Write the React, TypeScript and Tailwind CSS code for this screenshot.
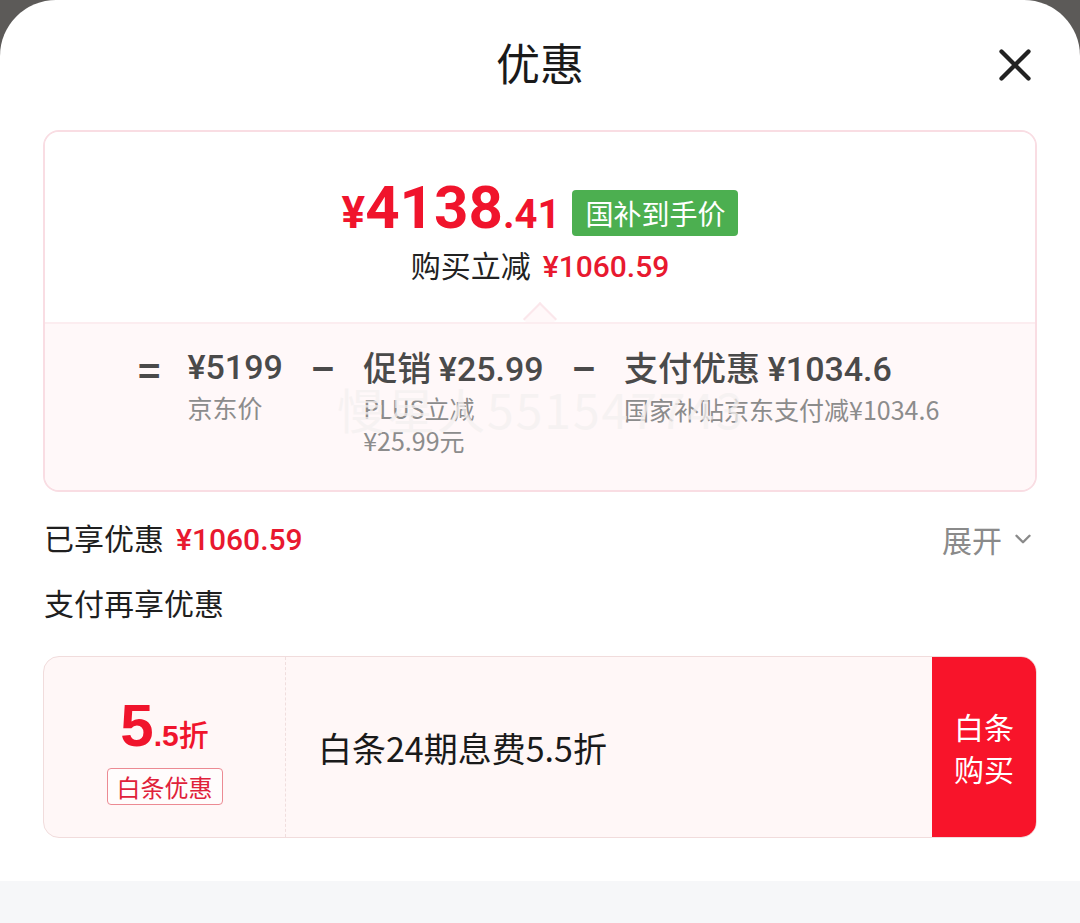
import { X, ChevronDown } from "lucide-react";

const cjk = { fontFamily: '"Noto Sans CJK SC", "Noto Sans", sans-serif' };
const num = { fontFamily: 'Roboto, "Noto Sans CJK SC", sans-serif' };
const arial = { fontFamily: '"Liberation Sans", Arial, sans-serif' };

export default function App() {
  return (
    <div className="h-[923px] w-[1080px] overflow-hidden bg-[#5c5a58]" style={cjk}>
      <div className="flex h-full flex-col rounded-t-[56px] bg-white">
        {/* Header */}
        <div className="relative flex h-[130px] items-start justify-center pt-[32px]">
          <h1 className="text-[44px] leading-[60px] text-[#1a1a1a]">优惠</h1>
          <button className="absolute top-[38px] right-[38px] text-[#222]">
            <X size={54} strokeWidth={1.9} />
          </button>
        </div>

        {/* Price card */}
        <div className="relative mx-[43px] overflow-hidden rounded-[16px] border-2 border-[#f9dde3]">
          <div className="flex h-[190px] flex-col items-center bg-white pt-[46px]">
            <div className="flex items-end gap-[12px]">
              <div className="flex items-baseline font-bold text-[#f0142c]" style={num}>
                <span className="text-[44px] leading-none">¥</span>
                <span className="text-[60px] leading-none">4138</span>
                <span className="text-[40px] leading-none">.41</span>
              </div>
              <span className="mb-[2px] rounded-[4px] bg-[#4caf50] px-[13px] py-[3px] text-[28px] leading-[40px] text-white">
                国补到手价
              </span>
            </div>
            <div className="mt-[6px] flex items-baseline gap-[12px] text-[30px] leading-[40px]">
              <span className="text-[#222]">购买立减</span>
              <span className="font-medium text-[#e8192f]" style={num}>¥1060.59</span>
            </div>
          </div>
          {/* pointer */}
          <div className="absolute top-[175px] left-1/2 h-[24px] w-[24px] -translate-x-1/2 rotate-45 border-t-2 border-l-2 border-[#fbe7eb] bg-[#fff8f9]" />
          <div className="relative h-[168px] border-t-2 border-[#fcedf0] bg-[#fff8f9] pt-[20px] pl-[93px]">
            <div className="flex items-start text-[#4a4a4a]">
              <span className="mt-[2px] mr-[27px] text-[38px] leading-[46px] font-bold">=</span>
              <div className="flex flex-col">
                <span className="text-[34px] leading-[46px] font-medium" style={num}>¥5199</span>
                <span className="text-[25px] leading-[34px] text-[#8c8c8c]">京东价</span>
              </div>
              <span className="mx-[29px] text-[38px] leading-[46px] font-bold">−</span>
              <div className="flex flex-col">
                <span className="text-[34px] leading-[46px] font-medium">
                  促销 <span style={num}>¥25.99</span>
                </span>
                <span className="text-[25px] leading-[32px] text-[#8c8c8c]">PLUS立减</span>
                <span className="text-[25px] leading-[32px] text-[#8c8c8c]">¥25.99元</span>
              </div>
              <span className="mx-[29px] text-[38px] leading-[46px] font-bold">−</span>
              <div className="flex flex-col">
                <span className="text-[34px] leading-[46px] font-medium">
                  支付优惠 <span style={num}>¥1034.6</span>
                </span>
                <span className="text-[25px] leading-[34px] text-[#8c8c8c]">国家补贴京东支付减¥1034.6</span>
              </div>
            </div>
            {/* watermark */}
            <span className="pointer-events-none absolute top-[56px] left-[292px] text-[48px] leading-[56px] tracking-[2px] text-[#f4f0f0]/75">
              慢星人551547743
            </span>
          </div>
        </div>

        {/* Summary */}
        <div className="mt-[24px] flex items-center justify-between px-[44px]">
          <div className="flex items-baseline gap-[12px] text-[30px] leading-[42px]">
            <span className="text-[#1f1f1f]">已享优惠</span>
            <span className="font-medium text-[#e8192f]" style={num}>¥1060.59</span>
          </div>
          <div className="flex items-center gap-[8px] text-[30px] leading-[42px] text-[#8a8a8a]">
            <span>展开</span>
            <ChevronDown size={26} strokeWidth={2.2} />
          </div>
        </div>
        <div className="mt-[20px] px-[44px] text-[30px] leading-[42px] text-[#1f1f1f]">支付再享优惠</div>

        {/* Coupon */}
        <div className="mx-[43px] mt-[33px] flex h-[182px] overflow-hidden rounded-[16px] border border-[#f1dcdc] bg-[#fff7f7]">
          <div className="flex w-[242px] flex-col items-center justify-center border-r border-dashed border-[#f0dede] pt-[6px]">
            <div className="flex items-baseline font-bold text-[#f0142c]">
              <span className="text-[60px] leading-[62px]" style={arial}>5</span>
              <span className="text-[30px]" style={arial}>.5</span>
              <span className="text-[30px] font-medium">折</span>
            </div>
            <span className="mt-[10px] rounded-[4px] border border-[#ec8a93] bg-white/60 px-[9px] text-[24px] leading-[35px] text-[#e0213a]">
              白条优惠
            </span>
          </div>
          <div className="flex flex-1 items-center pl-[32px] text-[34px] text-[#1a1a1a]">白条24期息费5.5折</div>
          <button className="flex w-[104px] flex-col items-center justify-center bg-[#f8142a] text-[30px] leading-[42px] text-white">
            <span>白条</span>
            <span>购买</span>
          </button>
        </div>

        <div className="mt-[43px] flex-1 bg-[#f6f7f9]" />
      </div>
    </div>
  );
}
